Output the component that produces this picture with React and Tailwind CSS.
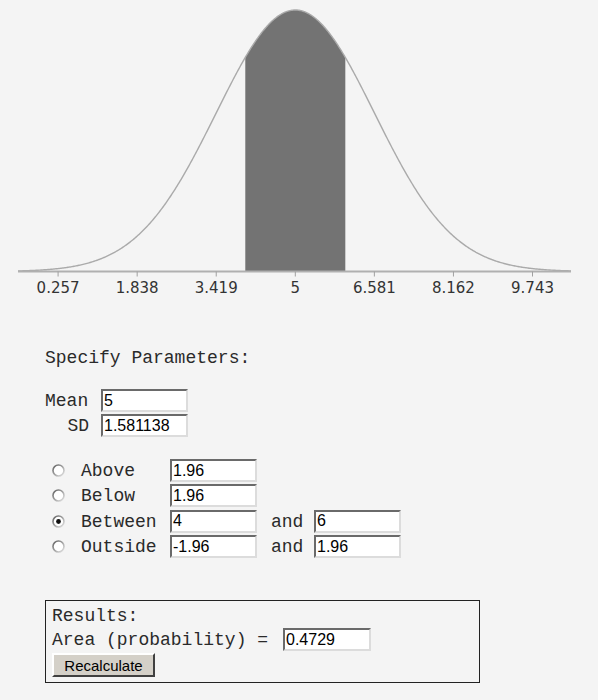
import React from "react";

const MEAN = 5;
const SD = 1.581138;
const CX = 295.3; // pixel x of the mean
const PX = 79.07; // pixels per SD
const BASE = 271.5;
const PEAK = 261.5;

const xToPx = (v) => CX + ((v - MEAN) / SD) * PX;
const yAt = (px) => {
  const z = (px - CX) / PX;
  return BASE - PEAK * Math.exp((-z * z) / 2);
};

// Build curve path between two pixel x positions
const curvePath = (x0, x1) => {
  let d = "";
  for (let x = x0; x <= x1 + 0.001; x += 1) {
    d += `${d ? "L" : "M"}${x.toFixed(2)},${yAt(x).toFixed(2)}`;
  }
  return d;
};

const ticks = ["0.257", "1.838", "3.419", "5", "6.581", "8.162", "9.743"];

const Chart = () => {
  const a = xToPx(4);
  const b = xToPx(6);
  const shade = `M${a},${BASE} ${curvePath(a, b).replace("M", "L")} L${b},${BASE} Z`;
  return (
    <svg width="598" height="300" className="block">
      <path d={shade} fill="#737373" />
      <path d={curvePath(18, 571)} fill="none" stroke="#aaaaaa" strokeWidth="1.4" />
      <line x1="18" y1={BASE} x2="571" y2={BASE} stroke="#b0b0b0" strokeWidth="2" />
      {ticks.map((t, i) => {
        const x = CX + (i - 3) * PX;
        return (
          <g key={t}>
            <line x1={x} y1={BASE} x2={x} y2={BASE + 5} stroke="#a0a0a0" strokeWidth="1" />
            <text
              x={x}
              y="293"
              textAnchor="middle"
              fontSize="15"
              fill="#333"
              fontFamily="'DejaVu Sans', sans-serif"
            >
              {t}
            </text>
          </g>
        );
      })}
    </svg>
  );
};

const Field = ({ value, w = "w-[87px]" }) => (
  <div
    className={`${w} h-[23px] bg-white border-2 border-t-[#6a6a6a] border-l-[#6a6a6a] border-b-[#dcdcdc] border-r-[#dcdcdc] flex items-center pl-[1px] text-[16px] leading-none text-black font-['Liberation_Sans',sans-serif]`}
  >
    {value}
  </div>
);

const Radio = ({ checked }) => (
  <svg width="13" height="13" viewBox="0 0 13 13" className="block">
    <defs>
      <linearGradient id="rg" x1="0" y1="0" x2="1" y2="1">
        <stop offset="0" stopColor="#5f5f5f" />
        <stop offset="1" stopColor="#e6e6e6" />
      </linearGradient>
    </defs>
    <circle cx="6.5" cy="6.5" r="5.5" fill="#fff" stroke="url(#rg)" strokeWidth="1.6" />
    {checked && <circle cx="6.5" cy="6.5" r="2.4" fill="#111" />}
  </svg>
);

const rows = [
  { label: "Above", v1: "1.96" },
  { label: "Below", v1: "1.96" },
  { label: "Between", v1: "4", v2: "6", checked: true },
  { label: "Outside", v1: "-1.96", v2: "1.96" },
];

export default function App() {
  return (
    <div className="w-[598px] h-[700px] bg-[#f4f4f4] overflow-hidden font-['Liberation_Mono',monospace] text-[18px] text-[#2a2a2a]">
      <Chart />
      <div className="pl-[45px]">
        <div className="mt-[47px] h-[22px] leading-[22px]">Specify Parameters:</div>

        <div className="mt-[20px] flex flex-col gap-[2px]">
          <div className="flex items-center h-[23px]">
            <span className="w-[56px] pt-[2px]">Mean</span>
            <Field value="5" />
          </div>
          <div className="flex items-center h-[23px]">
            <span className="w-[44px] text-right mr-[12px] pt-[2px]">SD</span>
            <Field value="1.581138" />
          </div>
        </div>

        <div className="mt-[22px] flex flex-col gap-[2.4px]">
          {rows.map((r) => (
            <div key={r.label} className="flex items-center h-[23px]">
              <div className="w-[36px] pl-[7px]">
                <Radio checked={r.checked} />
              </div>
              <span className="w-[89px] pt-[2px]">{r.label}</span>
              <Field value={r.v1} />
              {r.v2 && (
                <>
                  <span className="ml-[14px] w-[43px] pt-[2px]">and</span>
                  <Field value={r.v2} />
                </>
              )}
            </div>
          ))}
        </div>

        <div className="mt-[42px] w-[435px] h-[83px] border border-[#222] pl-[6px] pt-[4px]">
          <div className="h-[22px] leading-[22px]">Results:</div>
          <div className="flex items-center h-[25px]">
            <span className="w-[231px] whitespace-pre pt-[2px]">Area (probability) = </span>
            <Field value="0.4729" w="w-[88px]" />
          </div>
          <button className="mt-[1px] w-[103px] h-[24px] bg-[#d4d0c8] border-2 border-t-white border-l-white border-b-[#404040] border-r-[#404040] text-[15px] leading-none text-black font-['Liberation_Sans',sans-serif]">
            Recalculate
          </button>
        </div>
      </div>
    </div>
  );
}
